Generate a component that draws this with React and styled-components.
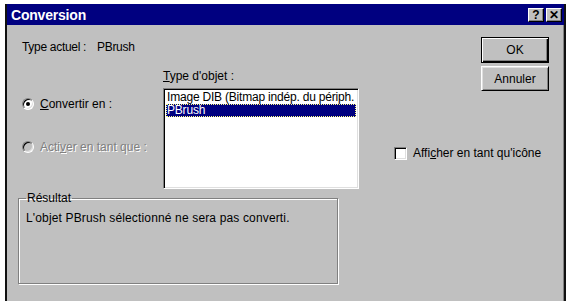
import styled, { createGlobalStyle } from 'styled-components';

let GlobalStyle = createGlobalStyle`
  body {
    margin: 0;
    background: #ffffff;
    font-family: "Liberation Sans", Arial, sans-serif;
    font-size: 12px;
    color: #000;
  }
`;

let Window = styled.div`
  margin: 4px 1px 0 5px;
  height: 297px;
  background: #c0c0c0;
  border-left: 2px solid #111;
  border-right: 2px solid #111;
  box-shadow: inset -1px 0 0 #808080;
  display: flex;
  flex-direction: column;
  box-sizing: border-box;
`;

let TitleBar = styled.div`
  height: 21px;
  background: #000080;
  display: flex;
  align-items: center;
  padding: 0 2px 0 4px;
`;

let Title = styled.div`
  flex: 1;
  color: #fff;
  font-weight: bold;
  font-size: 14px;
  letter-spacing: -0.2px;
`;

let TitleButton = styled.div`
  width: 16px;
  height: 14px;
  box-sizing: border-box;
  background: #c0c0c0;
  border: 1px solid;
  border-color: #fff #000 #000 #fff;
  box-shadow: inset -1px -1px 0 #808080;
  display: flex;
  align-items: center;
  justify-content: center;
  margin-left: ${(p) => (p.$gap ? '2px' : '0')};
  font-weight: bold;
  font-size: 12px;
  line-height: 1;
`;

let Body = styled.div`
  flex: 1;
  display: flex;
  padding: 12px 0 0 11px;
`;

let Main = styled.div`
  width: 463px;
  flex-shrink: 0;
  display: flex;
  flex-direction: column;
`;

let TypeRow = styled.div`
  display: flex;
  margin: 3px 0 0 4px;
  height: 14px;
  align-items: center;
  letter-spacing: -0.3px;
`;

let TypeLabel = styled.span`
  width: 75px;
`;

let Middle = styled.div`
  display: flex;
  height: 135px;
`;

let RadioCol = styled.div`
  width: 145px;
  flex-shrink: 0;
  padding: 43px 0 0 4px;
  box-sizing: border-box;
  display: flex;
  flex-direction: column;
  gap: 29px;
`;

let RadioRow = styled.div`
  display: flex;
  align-items: center;
  height: 14px;
  white-space: nowrap;
  color: ${(p) => (p.$disabled ? '#808080' : '#000')};
  text-shadow: ${(p) => (p.$disabled ? '1px 1px 0 #fff' : 'none')};
`;

let RadioDot = styled.span`
  width: 12px;
  height: 12px;
  flex-shrink: 0;
  box-sizing: border-box;
  border-radius: 50%;
  background: ${(p) => (p.$disabled ? '#c0c0c0' : '#fff')};
  border: 1px solid;
  border-color: #808080 #fff #fff #808080;
  box-shadow: inset 1px 1px 0 #000, inset -1px -1px 0 #dfdfdf;
  display: flex;
  align-items: center;
  justify-content: center;
  margin-right: 6px;
  &::after {
    content: '';
    width: 4px;
    height: 4px;
    border-radius: 50%;
    background: ${(p) => (p.$checked ? '#000' : 'transparent')};
  }
`;

let ListCol = styled.div`
  width: 196px;
  flex-shrink: 0;
  display: flex;
  flex-direction: column;
`;

let FieldLabel = styled.div`
  margin-top: 15px;
  height: 14px;
  line-height: 14px;
`;

let ListBox = styled.div`
  margin-top: 5px;
  height: 101px;
  box-sizing: border-box;
  background: #fff;
  border: 1px solid;
  border-color: #808080 #fff #fff #808080;
  box-shadow: inset 1px 1px 0 #000, inset -1px -1px 0 #dfdfdf;
  padding: 2px;
`;

let ListItem = styled.div`
  height: 13px;
  line-height: 13px;
  padding-left: 1px;
  white-space: nowrap;
  overflow: hidden;
  letter-spacing: -0.2px;
  background: ${(p) => (p.$selected ? '#000080' : 'transparent')};
  color: ${(p) => (p.$selected ? '#fff' : '#000')};
  outline: ${(p) => (p.$selected ? '1px dotted #ffff80' : 'none')};
  outline-offset: -1px;
`;

let CheckCol = styled.div`
  flex: 1;
  min-width: 0;
  padding: 92px 0 0 35px;
`;

let CheckRow = styled.div`
  display: flex;
  align-items: center;
  white-space: nowrap;
`;

let CheckBox = styled.span`
  width: 13px;
  height: 13px;
  flex-shrink: 0;
  box-sizing: border-box;
  background: #fff;
  border: 1px solid;
  border-color: #808080 #fff #fff #808080;
  box-shadow: inset 1px 1px 0 #000, inset -1px -1px 0 #dfdfdf;
  margin-right: 6px;
`;

let Group = styled.fieldset`
  width: 320px;
  height: 92px;
  box-sizing: border-box;
  margin: 3px 0 0 0;
  padding: 7px 7px 3px;
  border: 1px solid #808080;
  box-shadow: 1px 1px 0 #fff, inset 1px 1px 0 #fff;
  letter-spacing: 0.15px;
`;

let Legend = styled.legend`
  padding: 0 1px;
  margin-left: 0;
  line-height: 12px;
  letter-spacing: 0;
`;

let ButtonCol = styled.div`
  width: 68px;
  flex-shrink: 0;
  display: flex;
  flex-direction: column;
  gap: 3px;
`;

let Button = styled.div`
  height: ${(p) => (p.$default ? '26px' : '25px')};
  box-sizing: border-box;
  background: #c0c0c0;
  border: 1px solid;
  border-color: ${(p) => (p.$default ? '#000' : '#fff #000 #000 #fff')};
  box-shadow: ${(p) =>
    p.$default
      ? 'inset 1px 1px 0 #fff, inset -1px -1px 0 #000, inset -2px -2px 0 #808080'
      : 'inset 1px 1px 0 #dfdfdf, inset -1px -1px 0 #808080'};
  display: flex;
  align-items: center;
  justify-content: center;
`;

function App() {
  return (
    <>
      <GlobalStyle />
      <Window>
        <TitleBar>
          <Title>Conversion</Title>
          <TitleButton>?</TitleButton>
          <TitleButton $gap>✕</TitleButton>
        </TitleBar>
        <Body>
          <Main>
            <TypeRow>
              <TypeLabel>Type actuel :</TypeLabel>
              <span>PBrush</span>
            </TypeRow>
            <Middle>
              <RadioCol>
                <RadioRow>
                  <RadioDot $checked />
                  <span><u>C</u>onvertir en :</span>
                </RadioRow>
                <RadioRow $disabled>
                  <RadioDot $disabled />
                  <span>Acti<u>v</u>er en tant que :</span>
                </RadioRow>
              </RadioCol>
              <ListCol>
                <FieldLabel><u>T</u>ype d'objet :</FieldLabel>
                <ListBox>
                  <ListItem>Image DIB (Bitmap indép. du périph.</ListItem>
                  <ListItem $selected>PBrush</ListItem>
                </ListBox>
              </ListCol>
              <CheckCol>
                <CheckRow>
                  <CheckBox />
                  <span>Affi<u>c</u>her en tant qu'icône</span>
                </CheckRow>
              </CheckCol>
            </Middle>
            <Group>
              <Legend>Résultat</Legend>
              L'objet PBrush sélectionné ne sera pas converti.
            </Group>
          </Main>
          <ButtonCol>
            <Button $default>OK</Button>
            <Button>Annuler</Button>
          </ButtonCol>
        </Body>
      </Window>
    </>
  );
}

export default App;
